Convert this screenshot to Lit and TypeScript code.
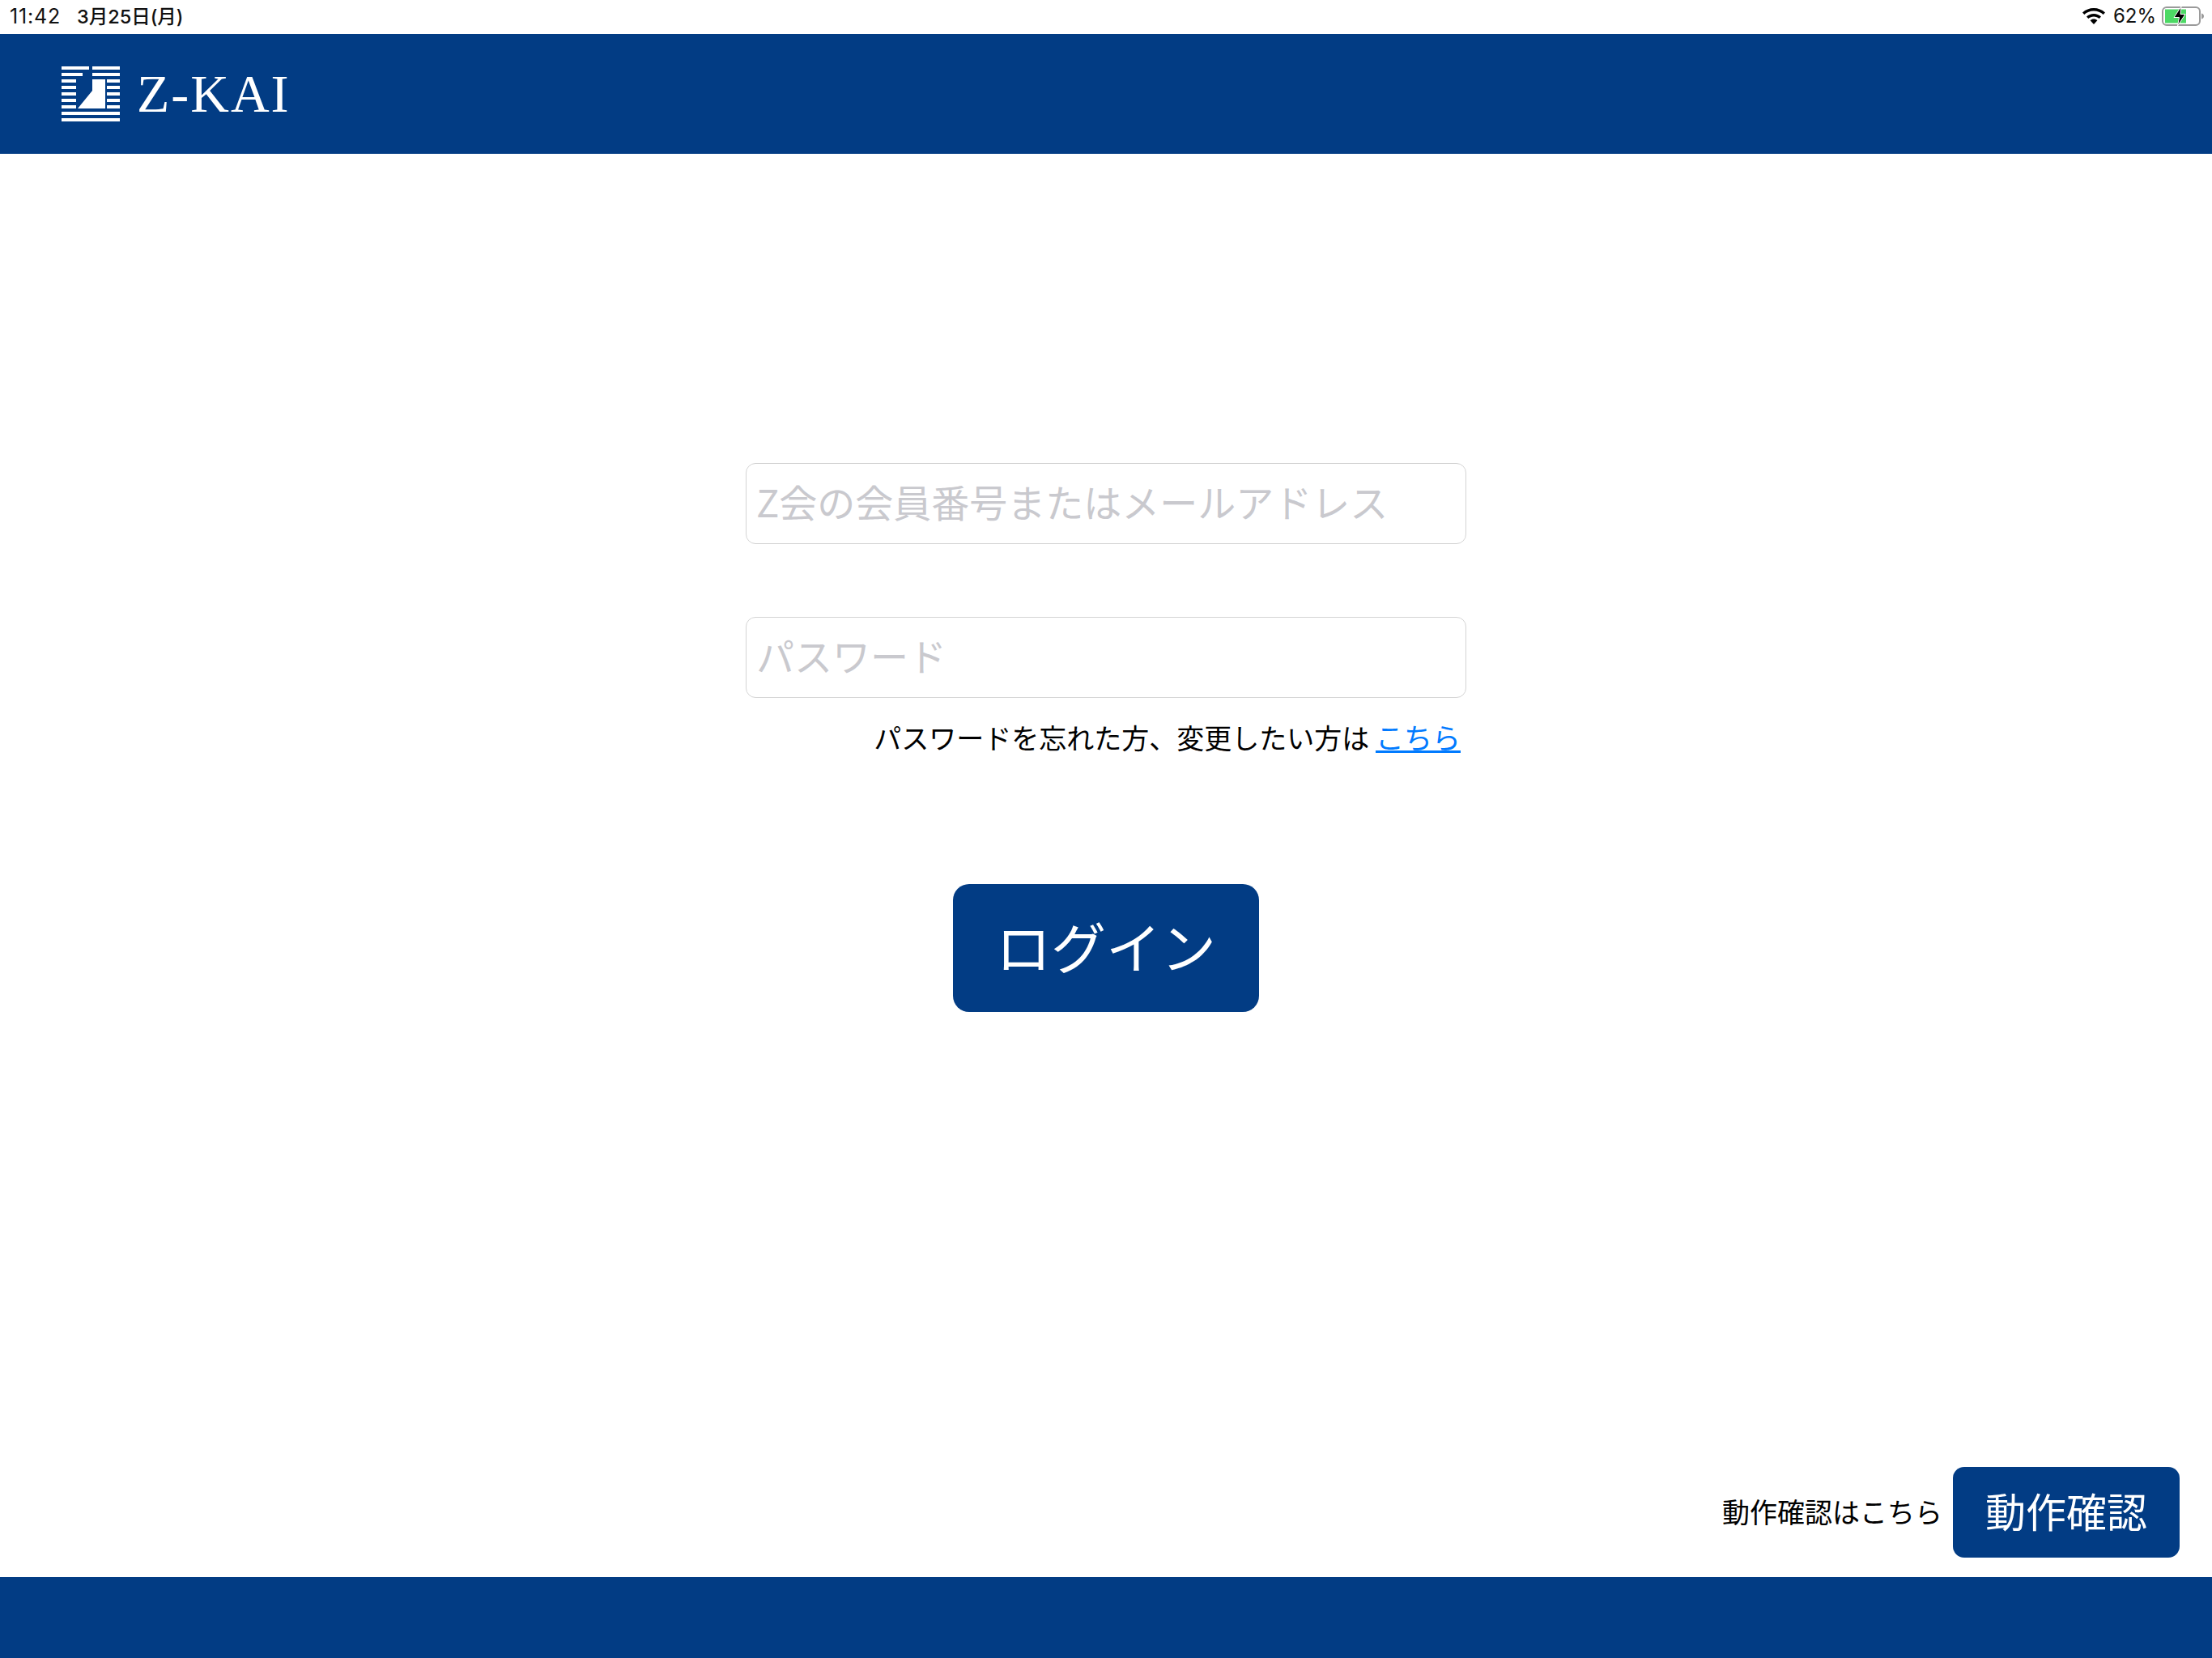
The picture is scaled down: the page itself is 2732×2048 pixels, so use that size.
import { LitElement, html, css, svg } from "lit";
import { customElement } from "lit/decorators.js";

const JP = `"Noto Sans CJK JP", "Noto Sans", sans-serif`;

// stripes of the Z-KAI mark: [y, x ranges]
const logoRows: [number, [number, number][]][] = [
	[0, [[0, 34], [38, 72]]],
	[8, [[0, 26], [38, 72]]],
	[16, [[0, 18], [56, 72]]],
	[24, [[0, 18], [56, 72]]],
	[32, [[0, 18], [56, 72]]],
	[40, [[0, 18], [56, 72]]],
	[48, [[0, 18], [56, 72]]],
	[56, [[0, 72]]],
	[64, [[0, 72]]],
];

@customElement("app-root")
export class AppRoot extends LitElement {
	static styles = css`
		:host {
			display: flex;
			flex-direction: column;
			height: 2048px;
			background: #fff;
			font-family: ${css([JP] as any)};
			color: #000;
		}

		.status {
			height: 42px;
			flex: none;
			display: flex;
			align-items: center;
			justify-content: space-between;
			padding: 0 10px 2px 12px;
			box-sizing: border-box;
			font-family: Inter, "Noto Sans CJK JP", sans-serif;
			font-size: 24px;
			line-height: 30px;
			color: #111;
		}
		.status-left { display: flex; align-items: baseline; gap: 20px; }
		.time { letter-spacing: 0.8px; font-size: 25px; }
		.date { font-size: 23.5px; font-weight: 500; }
		.status-right { display: flex; align-items: center; gap: 10px; }
		.status-right svg:last-child { margin-left: -3px; }

		.header {
			height: 148px;
			flex: none;
			background: #023c84;
			display: flex;
			align-items: flex-start;
			gap: 21px;
			padding: 40px 0 0 76px;
			box-sizing: border-box;
		}
		.wordmark {
			font-family: "Liberation Serif", serif;
			font-size: 66px;
			line-height: 68px;
			letter-spacing: 2px;
			color: #fff;
		}

		.main {
			flex: 1;
			display: flex;
			flex-direction: column;
			align-items: center;
			padding-top: 382px;
		}
		.form {
			width: 890px;
			display: flex;
			flex-direction: column;
			gap: 90px;
		}
		input {
			display: block;
			width: 100%;
			height: 100px;
			box-sizing: border-box;
			border: 1.5px solid #d4d4d4;
			border-radius: 12px;
			padding: 0 12px 7px;
			font-family: ${css([JP] as any)};
			font-size: 47px;
			background: #fff;
			outline: none;
		}
		input::placeholder { color: #c9c9ce; opacity: 1; }

		.hint {
			width: 890px;
			box-sizing: border-box;
			padding: 23px 7px 0 0;
			text-align: right;
			font-size: 34px;
			line-height: 50px;
		}
		.hint a { color: #007aff; text-decoration: underline; font-size: 35px; }

		button {
			border: none;
			background: #023c84;
			color: #fff;
			font-family: ${css([JP] as any)};
			padding: 0;
		}
		.login {
			width: 378px;
			height: 158px;
			margin-top: 156px;
			padding-bottom: 8px;
			border-radius: 20px;
			font-size: 68px;
		}

		.check {
			margin-top: auto;
			align-self: flex-end;
			display: flex;
			align-items: center;
			gap: 13px;
			padding: 0 40px 24px 0;
			font-size: 34px;
		}
		.check span { padding-bottom: 3px; }
		.check button {
			width: 280px;
			height: 112px;
			padding-bottom: 6px;
			border-radius: 14px;
			font-size: 50px;
		}

		.footer {
			height: 100px;
			flex: none;
			background: #023c84;
		}
	`;

	renderLogo() {
		return html`<svg width="72" height="68" viewBox="0 0 72 68">
			${logoRows.map(([y, ranges]) => ranges.map(([a, b]) =>
				svg`<rect x=${a} y=${y} width=${b - a} height="4" fill="#fff"></rect>`))}
			<path d="M38 16H54V52H20L38 30Z" fill="#fff"></path>
		</svg>`;
	}

	renderWifi() {
		return html`<svg width="28" height="20" viewBox="0 0 28 20">
			<path d="M14 0C8.6 0 3.9 2 0 5.4L2.3 8C5.5 5.1 9.5 3.5 14 3.5S22.5 5.1 25.7 8L28 5.4C24.1 2 19.4 0 14 0Z" fill="#000"></path>
			<path d="M14 7C10.6 7 7.5 8.3 5 10.5L7.3 13C9.1 11.4 11.4 10.4 14 10.4S18.9 11.4 20.7 13L23 10.5C20.5 8.3 17.4 7 14 7Z" fill="#000"></path>
			<path d="M14 13.5C12.3 13.5 10.8 14.1 9.6 15.2L14 20L18.4 15.2C17.2 14.1 15.7 13.5 14 13.5Z" fill="#000"></path>
		</svg>`;
	}

	renderBattery() {
		return html`<svg width="52" height="24" viewBox="0 0 52 24">
			<rect x="1" y="1" width="46" height="22" rx="5" fill="#fff" stroke="#9a9a9a" stroke-width="2"></rect>
			<path d="M4 3.5H30V20.500H4Z" fill="#4cd964"></path>
			<path d="M24 0L15 13.500H21.500L19.500 24L29 9.500H23Z" fill="#000" stroke="#fff" stroke-width="1"></path>
			<path d="M49 8.500C50.800 9 52 10.300 52 12S50.800 15 49 15.500Z" fill="#9a9a9a"></path>
		</svg>`;
	}

	render() {
		return html`
			<div class="status">
				<div class="status-left"><span class="time">11:42</span><span class="date">3月25日(月)</span></div>
				<div class="status-right">
					${this.renderWifi()}
					<span>62%</span>
					${this.renderBattery()}
				</div>
			</div>
			<div class="header">
				${this.renderLogo()}
				<span class="wordmark">Z-KAI</span>
			</div>
			<div class="main">
				<div class="form">
					<input type="text" placeholder="Z会の会員番号またはメールアドレス" />
					<input type="password" placeholder="パスワード" />
				</div>
				<div class="hint">パスワードを忘れた方、変更したい方は <a href="#">こちら</a></div>
				<button class="login">ログイン</button>
				<div class="check">
					<span>動作確認はこちら</span>
					<button>動作確認</button>
				</div>
			</div>
			<div class="footer"></div>
		`;
	}
}
